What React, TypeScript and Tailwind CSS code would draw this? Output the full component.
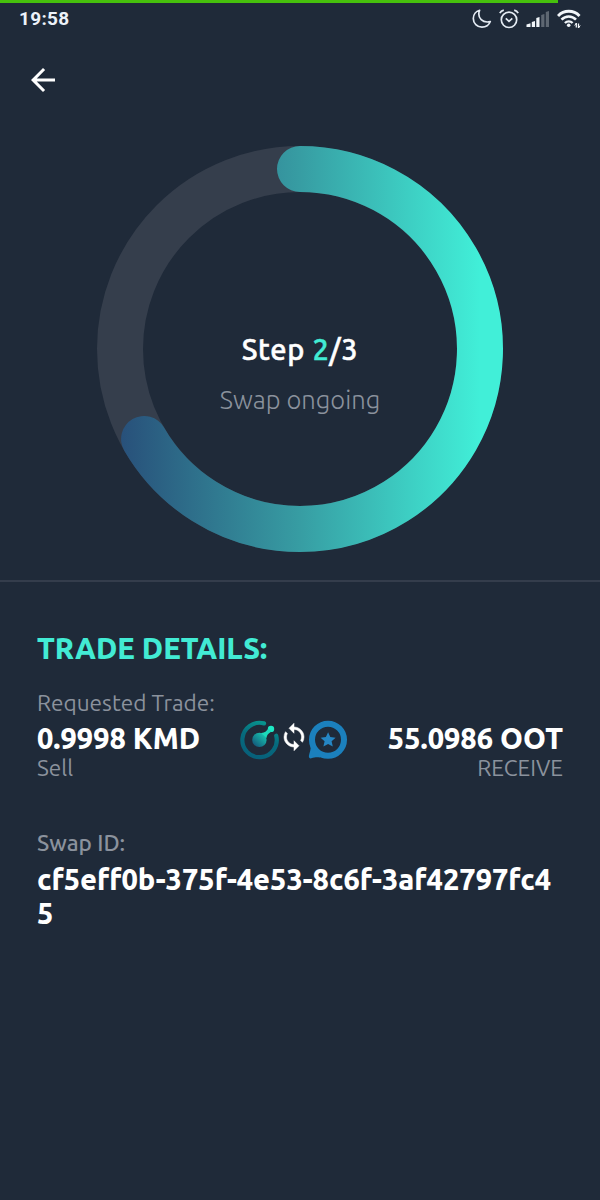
import { MdArrowBack } from 'react-icons/md';

function MoonIcon() {
  return (
    <svg width="20" height="20" viewBox="0 0 20 20" fill="none">
      <path
        d="M7.6 1.300C4 2.300 1.300 5.600 1.300 9.600c0 4.800 3.800 8.600 8.600 8.600 3.800 0 7.100-2.300 8.400-5.700-1 .3-2 .5-3.100.5-4.900 0-8.400-3.500-8.400-8 0-1.400.2-2.500.8-3.700z"
        stroke="#e4ebf3"
        strokeWidth="1.7"
        strokeLinejoin="round"
      />
    </svg>
  );
}

function AlarmIcon() {
  return (
    <svg width="20" height="20" viewBox="0 0 20 20" fill="none" stroke="#e4ebf3" strokeWidth="1.7">
      <circle cx="10" cy="10.800" r="7.700" />
      <path d="M6.800 9.300 10 12.300l3.300-3" />
      <path d="M.8 4.200Q2 1.800 4.800 1.100M19.200 4.200Q18 1.800 15.200 1.100" />
    </svg>
  );
}

function SignalIcon() {
  return (
    <svg width="24" height="18" viewBox="0 0 24 18" fill="#f1f5f9">
      <path d="M.5 17v-2.500l4-1.300V17z" />
      <path d="M5.800 17v-5l3.200-1v6z" />
      <path d="M10.300 17V8l3.200-1v10z" />
      <path d="M15.200 17V5l3.200-1v13z" opacity=".3" />
      <path d="M19.800 17V2L23 1v16z" opacity=".3" />
    </svg>
  );
}

function WifiIcon() {
  return (
    <svg width="24" height="20" viewBox="0 0 24 20" fill="none" stroke="#f1f5f9">
      <path d="M1 7c6-6.200 15.500-6.200 21.500 0" strokeWidth="3" />
      <path d="M4.500 10.700c4.100-4.200 10.400-4.200 14.500 0" strokeWidth="2.600" />
      <path d="M7.900 14c2.300-2.200 5.500-2.200 7.700 0" strokeWidth="2.400" />
      <circle cx="11.700" cy="16.200" r="1.800" fill="#f1f5f9" stroke="none" />
      <path d="M19.300 18.500v-4.500M21.500 14.500V19" strokeWidth="1.300" />
      <path d="M17.700 16.500l1.700-2.500M23.200 16.500 21.500 19" strokeWidth="1" />
    </svg>
  );
}

function SwapIcon() {
  return (
    <svg
      className="-mx-[1px] mb-[7px] size-[30px] fill-white stroke-white stroke-[0.4]"
      viewBox="0 0 24 24"
    >
      <path d="M12 4V1L8 5l4 4V6c3.310 0 6 2.690 6 6 0 1.010-.25 1.970-.7 2.800l1.460 1.460A7.930 7.930 0 0 0 20 12c0-4.420-3.580-8-8-8zm0 14c-3.310 0-6-2.690-6-6 0-1.010.25-1.970.7-2.800L5.240 7.740A7.930 7.930 0 0 0 4 12c0 4.420 3.580 8 8 8v3l4-4-4-4v3z" />
    </svg>
  );
}

function ProgressRing() {
  return (
    <svg width="406" height="406" viewBox="0 0 406 406" fill="none">
      <defs>
        <linearGradient id="ring" gradientUnits="userSpaceOnUse" x1="23" y1="0" x2="383" y2="0">
          <stop offset="0" stopColor="#28507a" />
          <stop offset=".5" stopColor="#379da3" />
          <stop offset="1" stopColor="#41efd8" />
        </linearGradient>
      </defs>
      <circle cx="203" cy="203" r="180" stroke="#353e4c" strokeWidth="46" />
      <path
        d="M203 23A180 180 0 1 1 47.100 293"
        stroke="url(#ring)"
        strokeWidth="46"
        strokeLinecap="round"
      />
    </svg>
  );
}

function KmdLogo() {
  return (
    <svg width="40" height="40" viewBox="0 0 40 40" fill="none">
      <defs>
        <linearGradient id="kmdRing" x1=".7" y1="0" x2=".35" y2="1">
          <stop offset="0" stopColor="#08958f" />
          <stop offset=".45" stopColor="#066b7d" />
          <stop offset="1" stopColor="#07607a" />
        </linearGradient>
        <linearGradient id="kmdCore" gradientUnits="userSpaceOnUse" x1="14" y1="26" x2="31" y2="8">
          <stop offset="0" stopColor="#14567a" />
          <stop offset=".55" stopColor="#16b5a8" />
          <stop offset="1" stopColor="#1ee8c4" />
        </linearGradient>
      </defs>
      <path
        d="M24 3.400A17.200 17.200 0 1 0 36.200 15.700"
        stroke="url(#kmdRing)"
        strokeWidth="4.200"
        strokeLinecap="round"
      />
      <circle cx="19.400" cy="19.900" r="7.200" fill="url(#kmdCore)" />
      <circle cx="31" cy="8.900" r="3.200" fill="#1ee8c4" />
      <path d="M21 12.900c3.500.2 5.300-1.500 7.400-4.400l3 3c-3 2-4.600 3.400-4.900 6.500z" fill="#1cd9bb" />
    </svg>
  );
}

function OotLogo() {
  return (
    <svg width="40" height="40" viewBox="0 0 40 40">
      <circle cx="20" cy="19.800" r="16" fill="none" stroke="#1b80bd" strokeWidth="6" />
      <path
        d="M2.500 25.500c.7 4-1 7-1.600 10.300-.3 2 1 3 2.500 2.500 3-.8 5-1.300 8.600-.8l1-5.500z"
        fill="#1b80bd"
      />
      <path
        d="m20.100 12.200 2.200 4.900 5.300.6-4 3.600 1.200 5.300-4.700-2.700-4.700 2.700 1.200-5.300-4-3.600 5.300-.6z"
        fill="#2586c4"
      />
    </svg>
  );
}

function StatusBar() {
  return (
    <header>
      <div className="h-[3px] w-[558px] bg-[#46c10d]" />
      <div className="flex h-[32px] items-center justify-between pl-[19px] pr-[19px]">
        <span className="font-[Roboto] text-[19px] font-bold tracking-[0.3px] text-[#edf2f9]">
          19:58
        </span>
        <div className="flex items-center gap-[7px]">
          <MoonIcon />
          <AlarmIcon />
          <SignalIcon />
          <WifiIcon />
        </div>
      </div>
    </header>
  );
}

function SwapProgress() {
  return (
    <section className="grid h-[474px] border-b-2 border-[#343d4c] pt-[38px]">
      <div className="col-start-1 row-start-1 justify-self-center">
        <ProgressRing />
      </div>
      <div className="z-10 col-start-1 row-start-1 flex flex-col items-center pt-[183px]">
        <p className="text-[29px] font-medium leading-[40px] tracking-[0.6px] [-webkit-text-stroke:0.5px_currentColor]">
          Step <span className="text-[#42ebd4]">2</span>/3
        </p>
        <p className="mt-[12px] text-[25.6px] font-light leading-[38px] text-[#8b929d]">
          Swap ongoing
        </p>
      </div>
    </section>
  );
}

function TradeDetails() {
  return (
    <section className="px-[37px] pt-[46px]">
      <h2 className="text-[29px] font-black leading-[40px] text-[#42ebd4]">TRADE DETAILS:</h2>
      <p className="mt-[20px] text-[22.6px] leading-[30px] text-[#8b929d]">Requested Trade:</p>
      <div className="mt-[2px] flex items-start justify-between">
        <div className="w-[203px]">
          <strong className="block whitespace-nowrap text-[29px] font-black leading-[36px]">
            0.9998 KMD
          </strong>
          <span className="block text-[22.6px] leading-[24px] text-[#8b929d]">Sell</span>
        </div>
        <div className="flex items-center">
          <KmdLogo />
          <SwapIcon />
          <OotLogo />
        </div>
        <div className="w-[215px] text-right">
          <strong className="block whitespace-nowrap text-[29px] font-black leading-[36px]">
            55.0986 OOT
          </strong>
          <span className="block text-[22.6px] leading-[24px] text-[#8b929d]">RECEIVE</span>
        </div>
      </div>
      <p className="mt-[48px] text-[22.6px] font-medium leading-[30px] text-[#8b929d]">Swap ID:</p>
      <p className="mt-[4px] w-[520px] break-all text-[29px] font-black leading-[34px]">
        cf5eff0b-375f-4e53-8c6f-3af42797fc45
      </p>
    </section>
  );
}

export default function App() {
  return (
    <main className="h-[1200px] w-[600px] overflow-hidden bg-[#1f2a39] font-['Ubuntu','Noto_Sans',sans-serif] text-white">
      <StatusBar />
      <nav className="flex h-[73px] items-center pl-[25px] pt-[16px]">
        <button aria-label="Back">
          <MdArrowBack className="size-[36px]" />
        </button>
      </nav>
      <SwapProgress />
      <TradeDetails />
    </main>
  );
}
